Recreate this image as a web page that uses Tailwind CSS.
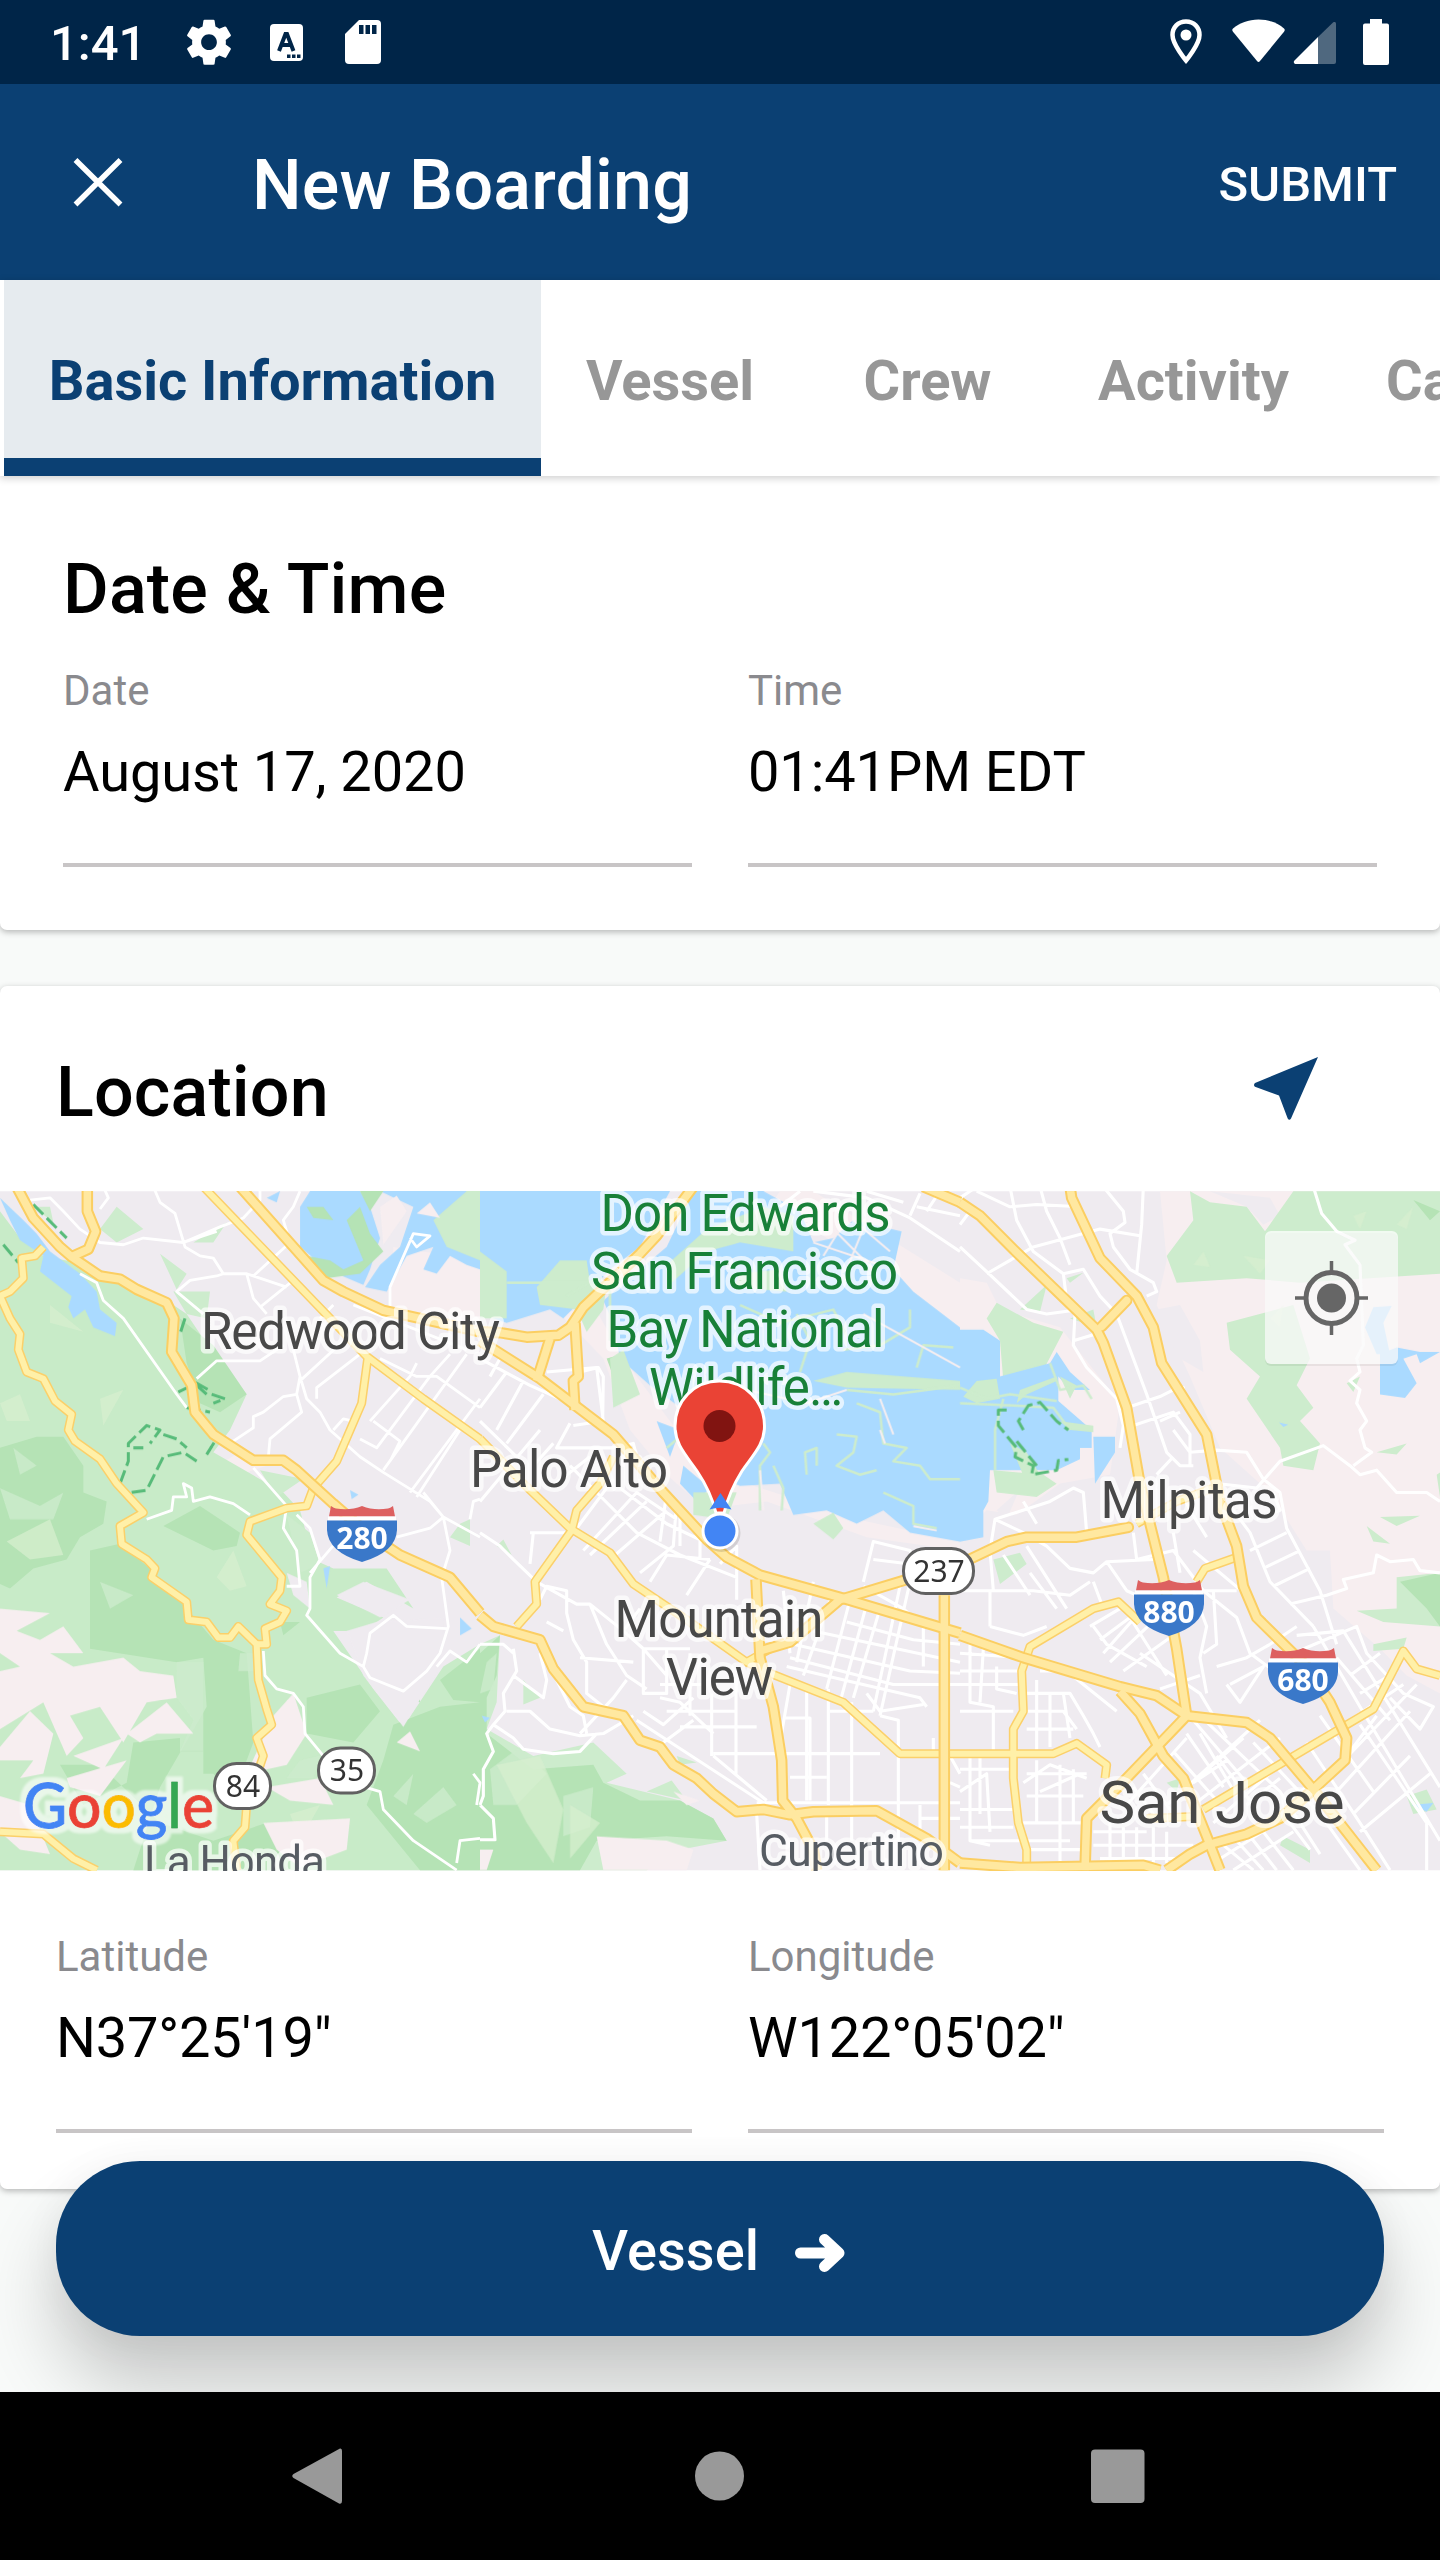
<!DOCTYPE html>
<html lang="en">
<head>
<meta charset="utf-8">
<title>New Boarding</title>
<script src="https://cdn.jsdelivr.net/npm/@tailwindcss/browser@4"></script>
</head>
<body class="w-[1440px] h-[2560px] overflow-hidden flex flex-col bg-[#f8faf9] font-['Roboto'] font-normal text-black relative">

<!-- Status bar -->
<header class="h-[84px] shrink-0 bg-[#002548] text-white flex items-center pl-[50px]">
  <span class="text-[49px] font-medium leading-[84px] w-[137px] pt-[4px]">1:41</span>
  <svg class="w-[253px] h-[84px] shrink-0" viewBox="187 0 253 84" fill="#fff">
    <path transform="translate(182 15.2) scale(2.25)" d="M19.43 12.98c.04-.32.07-.64.07-.98s-.03-.66-.07-.98l2.11-1.65c.19-.15.24-.42.12-.64l-2-3.46c-.12-.22-.39-.3-.61-.22l-2.49 1c-.52-.4-1.08-.73-1.69-.98l-.38-2.65A.488.488 0 0 0 14 2h-4c-.25 0-.46.18-.49.42l-.38 2.65c-.61.25-1.17.59-1.69.98l-2.49-1c-.23-.09-.49 0-.61.22l-2 3.46c-.13.22-.07.49.12.64l2.11 1.65c-.04.32-.07.65-.07.98s.03.66.07.98l-2.11 1.65c-.19.15-.24.42-.12.64l2 3.46c.12.22.39.3.61.22l2.49-1c.52.4 1.08.73 1.69.98l.38 2.65c.03.24.24.42.49.42h4c.25 0 .46-.18.49-.42l.38-2.65c.61-.25 1.17-.59 1.69-.98l2.49 1c.23.09.49 0 .61-.22l2-3.46c.12-.22.07-.49-.12-.64l-2.11-1.65zM12 15.5c-1.93 0-3.5-1.57-3.5-3.5s1.57-3.5 3.5-3.5 3.5 1.57 3.5 3.5-1.57 3.5-3.5 3.5z"/>
    <rect x="270" y="24" width="33" height="37" rx="4"/>
    <path fill="none" stroke="#002548" stroke-width="4" d="M279 51L285.500 34H287L293.500 51M281.500 45H291"/>
    <path fill="#002548" d="M287 54.500h3.500v3.500h-3.500zM292 54.500h3.500v3.500h-3.500zM297 54.500h3.500v3.500h-3.500z"/>
    <path d="M359 20H377a4 4 0 0 1 4 4V60a4 4 0 0 1-4 4H349a4 4 0 0 1-4-4V34Z"/>
    <path fill="#002548" d="M359 25h4.500v9h-4.500zM365.500 25h4.500v9h-4.500zM372 25h4.500v9h-4.500z"/>
  </svg>
  <svg class="w-[230px] h-[84px] ml-auto mr-[40px] shrink-0" viewBox="1170 0 230 84" fill="#fff">
    <path fill="none" stroke="#fff" stroke-width="4.500" d="M1186 21.500c-8 0-13.500 6-13.500 13.500 0 9.500 13.500 25.500 13.500 25.500s13.500-16 13.500-25.500c0-7.500-5.500-13.500-13.500-13.500Z"/>
    <circle cx="1186" cy="35" r="5.500"/>
    <path d="M1258.500 19.500c-10 0-19 3.500-25.500 9-1 1-1 2 0 3.300L1257 61c1 1.200 2 1.200 3 0l24-29.200c1-1.300 1-2.300 0-3.300-6.500-5.500-15.500-9-25.500-9Z"/>
    <path fill="#4f687f" d="M1318 37L1333 22.500c1.500-1 3-.5 3 1.500V62q0 2-2 2H1318Z"/>
    <path d="M1318 37V64H1296c-2 0-3-2-1.500-3.500Z"/>
    <path d="M1370 19h12v4.500h5q2 0 2 2V63q0 2-2 2H1365q-2 0-2-2V25.500q0-2 2-2h5Z"/>
  </svg>
</header>

<!-- App bar -->
<div class="h-[196px] shrink-0 bg-[#0b4073] text-white flex items-center pr-[43px]">
  <svg class="w-[252px] h-[196px] shrink-0" viewBox="0 84 252 196"><path d="M75.500 160L120.500 204.500M120.500 160L75.500 204.500" stroke="#fff" stroke-width="5.500"/></svg>
  <h1 class="text-[70px] font-medium leading-[82px] pt-[6px] whitespace-nowrap tracking-[0.15px]">New Boarding</h1>
  <span class="ml-auto text-[49px] font-medium leading-[58px] pt-[5px]">SUBMIT</span>
</div>

<!-- Tabs -->
<nav class="h-[196px] shrink-0 bg-white flex pl-[4px] overflow-hidden whitespace-nowrap text-[56px] font-bold text-[#979797] leading-[196px] shadow-[0_2px_8px_rgba(0,0,0,0.2)] relative z-10">
  <div class="w-[537px] shrink-0 bg-[#e6ebef] border-b-[18px] border-[#0b4073] text-[#0b4073] text-center pt-[3px]">Basic Information</div>
  <div class="w-[258px] shrink-0 text-center pt-[3px]">Vessel</div>
  <div class="w-[257px] shrink-0 text-center pt-[3px]">Crew</div>
  <div class="w-[275px] shrink-0 text-center pt-[3px]">Activity</div>
  <div class="w-[257px] shrink-0 pl-[55px] pt-[3px]">Catch</div>
</nav>

<main class="flex-1 flex flex-col gap-[56px] min-h-0">
  <!-- Date and time -->
  <section class="h-[454px] shrink-0 bg-white rounded-b-[7px] shadow-[0_2px_6px_rgba(0,0,0,0.28)] px-[63px] pt-[72px]">
    <h2 class="text-[70px] font-medium leading-[82px] tracking-[0.2px]">Date &amp; Time</h2>
    <div class="grid grid-cols-2 gap-[56px] mt-[36px]">
      <div class="h-[201px] border-b-[4px] border-[#c8c5c6]">
        <div class="text-[42px] leading-[50px] text-[#8a8a8e]">Date</div>
        <div class="text-[56px] leading-[66px] mt-[23px] tracking-[-0.1px]">August 17, 2020</div>
      </div>
      <div class="h-[201px] border-b-[4px] border-[#c8c5c6]">
        <div class="text-[42px] leading-[50px] text-[#8a8a8e]">Time</div>
        <div class="text-[56px] leading-[66px] mt-[23px] tracking-[-0.1px]">01:41PM EDT</div>
      </div>
    </div>
  </section>

  <!-- Location -->
  <section class="h-[1203px] shrink-0 bg-white rounded-[7px] shadow-[0_2px_6px_rgba(0,0,0,0.28)]">
    <div class="h-[205px] flex items-center justify-between pl-[56px] pr-[122px]">
      <h2 class="text-[70px] font-medium leading-[82px] pt-[6px] tracking-[0.15px]">Location</h2>
      <svg class="w-[65px] h-[63px]" viewBox="0 0 65 63"><path fill="#0b4073" d="M65 0L38 61.500Q36.300 64 34.700 61.500L26 38.500 2 29.800Q0 28 2 26Z"/></svg>
    </div>
    <svg class="block w-[1440px] h-[680px] font-['Roboto'] [&_path]:[vector-effect:non-scaling-stroke]" viewBox="0 1191 1440 680" stroke-linejoin="round">
      <defs>
        <!-- freeways and highways, drawn once as casing and once as surface -->
        <g id="fw" fill="none">
          <path d="M50 15L100 85 180 150 215 172 300 215 360 222 410 245 500 275 522 310 515 385 575 460 585 520 640 570 760 628 850 628 890 650 1000 725 1100 790 1200 840 1350 890 1440 970"/>
          <path d="M720 15L970 225 1030 250 1150 292 1290 315 1440 340"/>
          <path d="M262 15L262 70 287 115 265 155 215 172"/>
          <g transform="translate(1440)">
            <path d="M0 340L60 342 140 352 235 348 270 330 310 285 480 165 530 125 640 15"/>
            <path d="M285 320L295 440 280 450 285 515"/>
            <path d="M210 355L170 450"/>
            <path d="M0 360L180 445 400 570 550 700 680 805 740 845 840 885 1080 935 1440 1015"/>
            <path d="M0 975L40 1000 180 1030 220 1095 310 1180 430 1200 480 1255 540 1270 580 1310 650 1340 700 1375 770 1415 850 1410 930 1422 1000 1415 1190 1413 1340 1475 1440 1530"/>
            <path d="M828 895L840 1070 880 1180 905 1300 908 1390 950 1430 1000 1500 1010 1546"/>
            <path d="M840 1055L930 1035 1080 940 1280 895 1330 885"/>
            <path d="M1393 930L1393 1546" stroke-linecap="butt"/>
            <path d="M1330 15L1440 50"/>
          </g>
          <g transform="translate(2880)">
            <path d="M0 50L60 80 160 155 410 335 430 365 500 510 540 680 610 890 650 1050 680 1200"/>
            <path d="M330 15L335 40 420 175 530 260 580 330 605 410 740 570 780 720 830 820 850 910 890 980 1040 1090 1110 1170 1160 1250 1155 1300 1060 1365 960 1430 860 1465 740 1490 690 1510 620 1546"/>
            <path d="M425 328L500 270" stroke-linecap="round"/>
            <path d="M0 1020L190 1070 480 1135 590 1155 680 1200 860 1215 930 1250 1060 1365 1250 1546"/>
            <path d="M0 860L140 810 200 800 350 800 505 778" stroke-linecap="round"/>
            <path d="M680 1200L500 1340 380 1430 375 1546"/>
            <path d="M480 1145L540 1195 610 1290 670 1340 740 1470 780 1546"/>
            <path d="M0 1530L180 1540 550 1535 600 1546"/>
          </g>
        </g>
        <g id="rd" fill="none">
          <path d="M610 15L900 240 1100 395 1270 490 1440 580"/>
          <path d="M130 150L105 170 65 175 70 220 30 250 0 260 30 310 60 345 55 380 80 430 130 445 165 495 215 525 205 560 225 585 300 625 350 680 430 745 360 775 365 815 440 850 465 870 455 890 560 945 565 985 620 990 655 1025 690 1025 715 1000 770 1040 775 1120 800 1185 815 1220 770 1250 790 1290 740 1400 735 1450 700 1480 710 1546"/>
          <path d="M1103 400L1085 500 1010 630 940 690 920 730 860 735 750 765 740 795 845 890 840 920 810 950 860 965 840 990 795 1005 800 1040 770 1040"/>
          <path d="M0 1460L130 1465 220 1520 290 1546"/>
          <g transform="translate(1440)">
            <path d="M0 580L130 680 270 780 390 835 460 905 620 985 800 1080 870 1105 1090 1170 1260 1285 1440 1285"/>
            <path d="M400 620L360 680 290 740 275 785 165 900 170 950 110 1000"/>
            <path d="M800 1080L870 1050"/>
          </g>
          <g transform="translate(2880)">
            <path d="M0 1285L280 1285 350 1262 440 1310 435 1340"/>
            <path d="M530 770L650 720 760 690"/>
            <path d="M710 900L735 870 830 845"/>
            <path d="M540 990L475 945 400 960 210 1045 185 1100 190 1190 160 1230 160 1340 175 1440 200 1500 200 1546"/>
            <path d="M730 1410L1240 1185 1330 1055 1370 1095 1440 1110"/>
            <path d="M560 1430L720 1425"/>
          </g>
        </g>
        <filter id="halo" x="-10%" y="-20%" width="120%" height="140%">
          <feMorphology in="SourceAlpha" operator="dilate" radius="5" result="d"/>
          <feGaussianBlur in="d" stdDeviation=".8" result="b"/>
          <feFlood flood-color="#fff" flood-opacity=".6"/>
          <feComposite in2="b" operator="in"/>
          <feMerge><feMergeNode/><feMergeNode in="SourceGraphic"/></feMerge>
        </filter>
      </defs>

      <g transform="translate(0 1180) scale(.333333 .446429)">
        <path fill="#efebf0" d="M0 25H4320V1546H0Z"/>
        <!-- rural ground -->
        <g fill="#f7eef0">
          <path d="M1180 150L1440 180V320L1170 300Z"/>
          <path d="M650 640L720 610 800 640 720 660Z"/>
          <g transform="translate(1440)"><path d="M240 300L340 280 430 400 650 620 680 740 560 660 450 560 370 400Z"/><path d="M640 500L800 680 1130 760 1440 810 1440 830 1160 800 860 720 640 740ZM850 80L900 25H1000L1440 230V340L1240 230 1000 110Z"/></g>
          <g transform="translate(2880)"><path d="M600 25H1440V1150L1340 1110 1260 1050 1120 960 1110 830 1040 830 930 700 780 600 690 440 590 280 620 180Z"/><path d="M0 220L80 230 120 290 300 330 480 500 450 660 300 680 170 750 80 740 0 800Z"/></g>
        </g>
        <g fill="#efebf0"><g transform="translate(2880)"><path d="M750 25L930 40 960 80 910 100 860 60ZM590 290L660 280 720 360 730 430 660 400 600 330ZM110 740L170 700 180 690 140 760Z"/></g></g>
        <!-- open green -->
        <g fill="#cdeccd">
          <path fill="#c8ebc8" d="M0 70L60 130 130 170 230 185 380 220 500 270 560 300 650 400 740 480 690 560 640 610 850 700 900 740 940 850 1000 870 1160 870 1240 960 1100 900 1010 935 1150 980 1090 1010 1000 1010 1120 1140 1210 1225 1330 1090 1440 1040V1546H0Z"/>
          <path d="M100 60L160 95 150 60ZM300 110L350 60 430 110 350 140ZM480 165L560 210 530 245ZM520 250L630 250 620 310 560 300ZM580 140L680 95 640 140ZM780 650L910 670 830 710ZM860 750L930 790 960 860 900 880ZM1380 770L1410 760V820L1350 800Z"/>
          <g transform="translate(1440)"><path d="M0 1040L60 1020 50 1170 20 1230 160 1290 340 1260 440 1330 380 1350 600 1390 700 1430 740 1480 600 1500 500 1546H0ZM130 1120L180 1160 130 1175ZM50 820L70 805 95 840ZM500 1370L575 1345 620 1390ZM590 1290L650 1305 600 1310Z"/></g>
          <g transform="translate(2880)"><path d="M690 25L750 50 860 60 915 115 1000 25 1440 25V210L1020 230 860 220 650 230 620 170 700 90ZM800 320L1000 280 1050 400 1010 460 1060 510 1020 540 1080 590 1060 650 970 640 960 600 860 490 900 440 810 380ZM80 310L110 275 220 320 310 340 240 440 130 450 120 360ZM100 850L180 835 200 860 120 905ZM1250 610L1340 590 1310 615ZM1260 755L1380 752 1310 775ZM1220 775L1290 815 1240 810ZM1310 890L1440 880V1000L1270 990 1190 965 1310 960ZM1340 1380L1400 1365 1430 1410 1360 1420ZM970 1470L1050 1500 1050 1530 960 1490ZM1240 1040L1340 1025 1330 1050 1240 1055ZM330 310L400 290 410 330ZM180 290L260 235 240 295ZM320 220L370 208 330 230ZM1430 660L1440 655V710ZM1160 455L1200 440 1180 475ZM620 1350L660 1340 650 1370Z"/></g>
        </g>
        <!-- shaded hills -->
        <g fill="#b5e3b5">
          <path d="M110 575H190L250 640V700L320 720 310 770 240 800 200 850 100 870 30 915 0 905V600ZM270 830L360 815 450 870 560 960 640 1030 740 1060 760 1260 700 1380 640 1330H610V1280H540V1250L400 1260 380 1350 250 1400 180 1310 300 1310 480 1440 640 1480 800 1440 860 1546H400L480 1360 620 1180 610 1070 530 1080 270 1050ZM490 775L600 730 720 790 710 820 640 830ZM920 1160L1080 1130 1140 1190 1060 1260 920 1240ZM1150 1300L1180 1220 1320 1180 1440 1170V1546H1260L1100 1400ZM1320 1120L1440 1050V1170L1360 1165ZM1200 1160L1260 1130V1170ZM540 310L640 370 740 480 660 520 600 500 560 410ZM840 990L900 990 850 1020Z"/>
          <g transform="translate(1440)"><path d="M0 1060L60 1020 50 1110 20 1160V1240L160 1320 340 1310 370 1350 480 1390 600 1390 700 1430 740 1480 560 1470 350 1480 300 1546H0ZM380 400L430 390 440 450 400 440Z"/></g>
          <g transform="translate(2880)"><path d="M1320 900L1440 880V1000L1400 960ZM1360 45L1440 70 1410 90Z"/></g>
        </g>
        <g fill="#cdeccd" opacity=".8">
          <path d="M530 1080H610V1280H540L580 1210 530 1160ZM0 690L120 730 190 700 160 760 30 760ZM40 600L110 640 60 660ZM300 900L400 930 330 960ZM1240 1420L1330 1360 1370 1400 1280 1440ZM900 1300L960 1290 940 1340 860 1340ZM720 1060L760 1060 765 1100H715ZM1180 1380L1240 1330 1220 1400Z"/>
          <g transform="translate(1440)"><path d="M20 1080L50 1060 40 1140 0 1150ZM30 1320L120 1270 200 1330 110 1400 40 1400ZM250 1380L340 1360 330 1450 250 1470Z"/></g>
        </g>
        <g fill="#d8efd0" opacity=".7">
          <path d="M0 500L60 480 90 540 20 540ZM300 490L370 470 310 550ZM150 280L250 340 150 320ZM650 890L700 830 740 910 690 920ZM870 1420L960 1400 900 1480ZM20 810L150 760 190 840 90 850Z"/>
          <g transform="translate(1440)"><path d="M50 1310L180 1290 250 1410 220 1530 140 1440ZM270 1400L360 1440 270 1520Z"/></g>
          <g transform="translate(2880)"><path d="M700 190L730 160 750 195ZM850 170L930 180 900 210ZM930 310L970 280 960 330ZM1310 100L1360 60 1340 110ZM1180 80L1220 70 1200 110Z"/></g>
        </g>
        <!-- clearings among the hills -->
        <g fill="#f7eef0">
          <path d="M0 960L150 970 50 1010 120 1030 190 1000 250 1060 150 1060 220 1090 370 1070 420 1100 520 1110 530 1160 440 1170 370 1260 300 1180 210 1200 250 1250 200 1290 130 1170 0 1230 0 1100 60 1090 0 1060ZM0 1270L90 1190 160 1240 130 1330 60 1340 100 1300 0 1300ZM380 1240L500 1170 580 1240 470 1240 420 1260ZM200 1340L380 1300 300 1380 210 1360ZM220 1290L370 1250 310 1320ZM820 1200L880 1150 920 1240 860 1310 740 1330ZM800 1360L960 1340 1000 1400 870 1390ZM790 1440L1050 1430 1040 1500 900 1540 830 1500ZM0 1380L90 1400 150 1510 60 1500 0 1460ZM1190 1260L1230 1235 1260 1280Z"/>
          <path fill="#efebf0" d="M1010 930L1090 900 1230 940 1140 980ZM1040 1010L1130 990 1330 980 1320 1090 1210 1225 1090 1110ZM860 880L920 900 930 960 880 930Z"/>
          <g transform="translate(1440)"><path d="M350 1470L560 1480 640 1500 620 1546H370ZM0 1500L40 1500 20 1546H0ZM580 1370L660 1390 620 1400Z"/></g>
        </g>
        <!-- water -->
        <g fill="#aadaff">
          <path d="M0 40L70 90 110 120 150 160 240 210 290 250 300 290 350 320 345 350 280 330 255 290 220 310 205 285 215 260 120 205 130 170 60 135 30 90ZM900 60L930 25H1080L1110 60 1140 130 1110 200 1090 235 980 200 900 150ZM1140 25H1440V200L1400 190 1350 170 1310 210 1270 200 1300 150 1220 170 1160 250 1095 240 1140 190 1200 150 1240 60ZM800 40L840 25 830 50ZM1050 695L1075 705 1055 715ZM1380 980L1415 1005 1380 1020ZM970 870L990 865 980 915Z"/>
          <g transform="translate(1440)">
            <path d="M0 25H570L480 150 390 200 330 250 250 310 210 290 80 320 0 300ZM640 25H850L960 70 1000 140 1060 130 1120 90 1265 115 1240 200 1300 250 1440 330V810L1290 790 1210 740 1130 770 1040 740 940 750 900 680 780 685 660 650 620 520 510 460 420 400 400 320 370 270 480 200 560 150ZM5 1200L30 1205 15 1215Z"/>
            <path d="M610 640L690 690 650 720 600 680ZM530 540L600 560 570 620Z"/>
          </g>
          <g transform="translate(2880)"><path d="M0 335L70 335 120 360 120 440 270 410 290 385 330 430 390 470 330 470 295 440V495L395 560V600L360 600V625L290 650 90 650 85 720 70 740V800L0 810ZM400 575H465V610L405 680ZM1260 390L1310 375 1380 385 1440 385 1380 410 1370 390 1330 400 1370 455 1335 488 1260 480ZM1240 285L1295 282 1270 320 1290 390 1250 390 1215 330ZM1355 1400L1420 1395 1400 1415ZM957 543L985 548 970 553Z"/></g>
        </g>
        <!-- marshes and salt pond levees -->
        <g fill="#cdeccd">
          <path fill="#b5e3b5" d="M920 60L940 85 1000 90 970 60ZM1040 90L1080 60 1110 120 1150 160 1080 210 980 220 920 170 990 180 1030 200 1090 180ZM1080 25H1150L1110 70Z"/>
          <path d="M1300 90L1400 25H1440V180L1340 150Z"/>
          <path fill="#f7eef0" d="M1140 60L1190 35 1220 70 1150 145ZM1250 75L1290 50 1320 85Z"/>
          <g transform="translate(1440)"><path d="M0 160L80 205 80 310 0 310ZM170 240L240 180 320 180 330 230 380 230 370 290 320 340 290 290 180 280ZM560 190L680 110 850 60 940 80 940 160 780 140 680 160 560 240ZM390 400L430 380 480 480 400 510ZM1000 770L1060 745 1090 780 1060 805ZM640 700L770 700 740 760 640 750ZM780 210L900 200 920 250 760 240ZM1000 450L1100 430 1440 450 1440 470 1100 465Z"/></g>
          <g transform="translate(2880)"><path d="M10 485L50 450 110 445 120 490 50 500ZM170 500L180 470 290 440 290 450 200 480ZM150 590L200 610 240 660 200 680ZM100 650L250 660 290 680 230 710 110 700ZM300 440L350 460 330 490ZM300 540L400 550V565L330 560Z"/></g>
        </g>
        <g fill="none" stroke="#cdeccd" stroke-width="2.500">
          <g transform="translate(1440)"><path d="M840 740L840 640 870 610 850 590M905 740L910 690 880 640M980 660L975 610 1010 600V640M1070 570L1130 575 1120 610 1070 640 1140 660 1190 650M1130 500L1200 520 1210 590 1280 600 1240 630 1320 640 1350 670 1440 670M1100 470L1240 480 1440 460M1090 380L1200 370 1290 330 1290 290M960 430L990 360 950 300M1310 420L1330 370 1420 375M1210 700L1300 730 1300 770 1370 780M780 280L900 320 1060 290 1100 350M260 260L350 220 390 250V360M80 230H330M640 550L560 600"/></g>
          <g transform="translate(2880)"><path d="M0 465L80 490 150 480 290 495M130 490L105 560V650M0 500L160 505 280 510 330 560M270 410L300 470 370 460 395 490"/></g>
        </g>
        <g fill="none" stroke="#f7eef0" stroke-width="2">
          <g transform="translate(1440)"><path d="M1000 140L1200 190M1060 110L1180 200M1120 90L1230 160M1100 200L1160 90M1030 170L1080 110M800 470L980 500 1100 470M1240 570L1200 490M850 740L840 650M1150 300L1440 420M1200 560L1215 590M1300 775L1370 785"/></g>
        </g>
        <!-- trails -->
        <g fill="none" stroke="#57bb79" stroke-width="3" stroke-dasharray="14 5">
          <path d="M100 55L200 130M10 145L55 185M555 310L540 345M535 475L590 455 625 470M590 460L620 480M635 480L675 490 640 500M560 510L630 520M360 680L385 630 385 590 440 550 480 560 450 590M400 600L430 600M395 700L440 695 490 620 550 610 590 630M490 570L530 580 560 600M620 615L645 585"/>
          <g transform="translate(2880)"><path d="M140 515H115V550L170 600 165 620 220 640 215 660 290 650 295 628 325 626M190 560L175 540 205 505 240 498 290 540 325 560M170 585L230 640"/></g>
        </g>

        <!-- minor streets -->
        <g fill="none" stroke="#fff" stroke-width="3.100">
          <path stroke-width="2.800" d="M90 45L150 40 190 70 240 110 300 140 370 145 430 130 550 140 660 105 730 85 780 45V15M460 15L480 50 525 75 555 150 600 170 640 175 670 210 740 210 760 265 800 300M550 140L650 115M670 210L650 215 570 225 530 250 610 300M760 215L870 140 850 90 880 60 900 25M740 210L860 240M780 285L880 225M310 15L325 40 300 65M240 210L290 230 310 270 370 310 530 480 560 510M590 445L650 405 780 405 850 370M880 380L900 440 890 480 850 485 790 520 760 530 760 555 700 585M900 440L920 490 960 520 990 560 1080 620 1150 655 1290 720 1330 755 1440 800M900 450L1060 340M950 490V465L1080 390M890 480L905 520 810 580 805 620M1000 280L960 310M1060 280L1400 380M1140 400L1250 440 1310 440 1440 510M1110 540L1230 440 1250 410M1080 580L1130 600 1290 440 1350 390M1150 650L1400 390M1230 700L1440 490M1250 710L1380 560M1120 540L1200 585 1170 630M1000 560L1030 535 1060 540M1170 300V240L1240 120 1290 125 1250 150 1230 130M440 760L515 740 520 710 560 710 550 680 575 690 580 720 630 710 700 725 750 750M760 645L860 730 850 780 890 830 900 910 860 910M890 750L930 780 960 850 930 890 930 960 920 975 1020 1060 1090 1090 1110 1115 1210 1145 1280 1100 1320 1060 1345 1000 1325 890 1350 830 1330 755M930 880L1010 810M1190 800L1290 780 1330 755 1270 700M1340 1005L1220 1000 1180 975 1110 1015 1100 1060 1090 1090M1310 1090L1350 1055 1400 1080 1440 1040M790 1055L795 1110 830 1140 880 1150 910 1180 915 1240 970 1290 1050 1350 1140 1370 1150 1410 1240 1480 1370 1546M1420 1330L1440 1350 1430 1400M1370 1530L1380 1480 1440 1475M1410 760L1420 720 1440 715"/>
          <g transform="translate(1440)">
            <path d="M0 400L150 460 270 500M0 510L80 430M50 560L130 450M80 590L190 480M30 440L60 400 120 410M220 590L160 640M300 430L355 420 370 440 368 540M270 545L230 600 400 600 460 590 480 650M200 430L350 420 370 540 280 550M0 720L180 560M0 790L60 820 100 850 170 900 290 950 330 950 430 1010 490 1050 560 1110M150 790L270 790M160 790L150 860M0 540L110 620M270 640L350 700 470 790 600 840 770 890M210 690L330 620M310 830L470 700 590 760M290 780L400 670M330 840L500 720M390 850L560 740M420 690L560 770 700 820M510 900L560 840 690 850M480 880L580 820 590 720M540 810L560 700M600 820V730M660 850V800M720 860L770 820V940M620 930L690 850M180 940L200 910 260 920 260 970 280 1030 320 1080 320 1150 370 1180M200 990L250 1010M300 1070L460 1080M330 950L380 1040 440 1110 500 1140M430 1010L480 960M490 1050H630M490 1050V1150H560V1050M540 1160L600 1170 700 1240M440 1120L400 1160 300 1240M100 1050L110 1100 70 1150 75 1190 40 1220 20 1240 40 1280 10 1320 10 1380 0 1400M80 1190L150 1190 210 1230 300 1245 370 1240 460 1200M40 1220L100 1250 130 1275 220 1285 300 1280 350 1240M100 1110L190 1160 200 1120 180 1060M230 1120L270 1180 310 1200 320 1240M0 1040L70 1040 100 1060M0 1400L40 1430 45 1478 0 1478"/>
            <path d="M630 1060V1200M695 1150V1290M768 1110V1330M560 1190H768M600 1225H830M540 1130H670M470 1210L860 1400M490 1190L550 1220 640 1160M550 1260L640 1210M700 1285H1200M830 1395H1440M860 1390L700 1290M830 1420L840 1546M930 1130L900 1260M910 1205H990V1390M980 1130V1390M1045 1140V1400M1040 1420V1480M1115 1170V1480M1255 1290V1480M930 1338H1040M930 1060L910 920M1000 900L950 1080M1060 920L970 1110M1110 940L1040 1140M1160 950L1080 1170M1200 960L1120 1160M1260 910L1180 1190M1290 900L1200 1200M940 1040L1290 1100 1440 1105M930 1070L1240 1130 1440 1130M920 1090L1320 1160 1340 1180M1000 1010L1440 1080M1100 990L1300 1030 1440 1040M1150 900L1180 810 1290 830 1300 850M1180 850L1290 860M1150 910L1270 960 1330 1000V1090M1200 1200L1255 1210V1290M900 970L1010 1000M1050 1190H1180M1160 1150L1200 1190 1330 1175M1320 1400V1480M1320 1430H1440M1360 1290V1250M1410 1290L1440 1330M1410 1350L1440 1360M900 60L960 25M1000 25L1160 40 1290 85 1440 160M1290 80L1320 30M1310 60L1440 80M1270 50L1160 25M1340 70L1380 25"/>
          </g>
          <g transform="translate(2880)">
            <path d="M0 40L50 15M50 25L150 60 230 55 360 60M150 15L170 90 220 160 310 210 370 200 420 260 470 300 560 480 620 610 660 640 700 640M240 15L260 70 300 130 330 190M80 210L220 150 420 110 540 125M0 100L30 70M0 150L80 205 200 290 260 300 360 290M430 15L490 70 495 95 450 120 460 150 510 200 580 230 590 250 560 260M550 15L545 100 530 210M310 210L320 270 345 300 340 370 380 420 470 490 490 550 480 600M340 360L430 340M500 510L600 485 640 470 670 465V500M600 540L660 520M520 550L640 520 690 570 690 640M640 560L690 610 770 605 860 610 910 670 960 700 980 780 1080 920 1130 1040M590 660L640 620M660 690L690 740 740 800M810 730L870 790 930 900 1060 1000M890 760L960 740 940 700M770 680L890 690 960 630 1090 595 1170 640 1200 660 1250 650 1310 700 1400 700 1440 720M870 830L980 790M910 870L1020 830M940 910L1050 870M990 950L1100 930 1160 915 1150 895 1240 880 1250 840 1290 855 1360 850 1380 875 1440 880M1060 15L1085 75 1130 115 1185 135 1155 145 1200 190 1210 370 1190 400 1200 430 1170 450 1200 470 1190 500 1220 540 1200 560 1215 600 1235 610 1180 640M100 920L90 830 105 760 190 790 260 820 330 870 400 880 440 855 580 850M105 760L270 720 340 690 370 700 380 790M190 720L230 770M130 840L210 930M0 920H220L330 930 390 900M90 920V1000M210 880L290 960M90 1000L190 1020 260 1000M200 820L320 960M440 855L500 920 530 930M400 900L430 960M520 790L530 850 640 830 730 920H830M640 790L660 880M700 830L860 930M400 1000L440 1040 560 1090M390 1000L480 960M430 1060L560 950M450 1080L620 960M490 1100L640 1020M420 1030L510 980 620 1110M540 1060L720 1150 800 1250M700 920L740 1000 720 1070 740 1150M760 920L770 1040 730 1060M730 920L830 980 870 1060 960 1110M770 1090L860 1070 930 1040M810 1130L910 1090 840 1170 800 1130M600 1140L720 1110M900 980L1050 1120M930 1040L1010 1000M1000 1060L1190 1000 1220 1060 1330 1150 1420 1180 1380 1230 1290 1160M1010 1020L1150 1010 1440 1360M1060 1000L1200 1180 1440 1480M1200 1220L1400 1440V1546M1130 1070L1290 1210M1170 1110L1260 1060M1200 1150L1310 1100M1130 1230L1330 1130M1080 1200L1240 1370M1040 1260L1200 1440 1290 1546M1160 1290L1250 1200M1100 1340L1370 1130M1130 1370L1350 1190M1180 1420L1350 1290M1200 1460L1410 1330"/>
            <path d="M0 1060L190 1070M0 1100H180M0 1130H190M30 1020V1170L100 1180V1280M70 1050L60 1170M0 1190H160M110 1090V1140L170 1150M190 1150H330L370 1200 400 1240 420 1270M200 1190H310L350 1230M230 1120V1280M270 1150V1270M310 1150L330 1250M200 1230H340M240 1100L320 1100 470 1190M0 1320H150M0 1370L80 1330 90 1460M30 1290V1480L90 1490M60 1290V1420M0 1410H170M0 1450H160M30 1480H330M230 1300V1440M200 1330H380M190 1350L270 1310 380 1340M240 1370L360 1330M300 1310V1546M340 1320V1440M200 1380H370M190 1440H370M200 1500H370M400 1490H700M400 1460H560M420 1520H650M450 1440V1546M490 1450V1546M530 1450V1546M580 1450V1530M620 1460V1530M500 1400L680 1250M520 1360L590 1430M550 1330L660 1440M640 1280L770 1390M700 1210L860 1350M720 1240L830 1380M680 1240L790 1360M650 1380L900 1210M620 1400L850 1250M700 1400L960 1250M700 1350L800 1300M760 1440L960 1310M720 1200L960 1370 1080 1510M860 1400L960 1340M880 1260L1080 1420 1200 1546M770 1290L870 1390M790 1490L880 1546M830 1480L910 1546M870 1470L950 1546M910 1460L1000 1546M760 1530L970 1430M820 1546L1000 1460M1000 1380L1100 1330M960 1410L1050 1500"/>
          </g>
        </g>
        <!-- yellow roads -->
        <use href="#rd" stroke="#fbd06a" stroke-width="9"/>
        <use href="#rd" stroke="#fff0a8" stroke-width="6"/>
        <use href="#fw" stroke="#fbce62" stroke-width="11.500"/>
        <use href="#fw" stroke="#ffe8a0" stroke-width="7.500"/>
      </g>

      <!-- place labels -->
      <g fill="#484848" stroke="#fff" stroke-opacity=".68" stroke-width="9" paint-order="stroke" font-size="51">
        <text x="201" y="1349" textLength="299">Redwood City</text>
        <text x="470" y="1487" textLength="198">Palo Alto</text>
        <text x="614.500" y="1637" textLength="209">Mountain</text>
        <text x="666" y="1695" textLength="107">View</text>
        <text x="1100.500" y="1517.500" textLength="177">Milpitas</text>
        <text x="1099.500" y="1823" font-size="60" textLength="245">San Jose</text>
        <g fill="#575c63" font-size="45">
          <text x="759" y="1866" textLength="185">Cupertino</text>
          <text x="144" y="1877" font-size="44" textLength="181">La Honda</text>
        </g>
        <g fill="#188038">
          <text x="600.500" y="1231" textLength="290">Don Edwards</text>
          <text x="591" y="1288.500" textLength="307">San Francisco</text>
          <text x="606.500" y="1347" textLength="278">Bay National</text>
          <text x="649" y="1405" textLength="194">Wildlife…</text>
        </g>
      </g>

      <!-- interstate shields -->
      <defs>
        <g id="shield">
          <path fill="#dd6060" d="M-33 10.500L-31 0Q-28 2-26 2.500Q-12 5 0 0Q12 5 26 2.500Q28 2 31 0L33 10.500Z"/>
          <path fill="#fff" d="M-34 10.500H34V14.500H-34Z"/>
          <path fill="#3a78c9" d="M-35 14.500H35V24Q34 46 0 56Q-34 46-35 24Z"/>
        </g>
      </defs>
      <g font-family="Noto Sans" font-weight="700" font-size="30" fill="#fff" text-anchor="middle">
        <use href="#shield" x="362" y="1506"/><text x="362" y="1548.500">280</text>
        <use href="#shield" x="1169" y="1580"/><text x="1169" y="1622.500">880</text>
        <use href="#shield" x="1303" y="1648"/><text x="1303" y="1690.500">680</text>
      </g>
      <g fill="#fff" stroke="#616161" stroke-width="3">
        <rect x="214.500" y="1763.500" width="56" height="45" rx="22"/>
        <rect x="318.500" y="1748" width="56" height="45" rx="22"/>
        <rect x="903.500" y="1548.500" width="70" height="45" rx="22"/>
      </g>
      <g fill="#333" text-anchor="middle" font-size="30" font-family="Noto Sans">
        <text x="243" y="1797">84</text><text x="347" y="1780.500">35</text><text x="939" y="1582">237</text>
      </g>

      <!-- Google attribution -->
      <text x="23" y="1828" font-family="Lato" font-size="62" font-weight="500" textLength="191" lengthAdjust="spacingAndGlyphs" stroke-width=".8" filter="url(#halo)"><tspan fill="#4285f4" stroke="#4285f4">G</tspan><tspan fill="#ea4335" stroke="#ea4335">o</tspan><tspan fill="#fbbc05" stroke="#fbbc05">o</tspan><tspan fill="#4285f4" stroke="#4285f4">g</tspan><tspan fill="#34a853" stroke="#34a853">l</tspan><tspan fill="#ea4335" stroke="#ea4335">e</tspan></text>

      <!-- marker and current position -->
      <path fill="#ea4335" stroke="#fff" stroke-width="3" d="M719.500 1381C694 1381 675 1401 675 1426C675 1444 685 1454 697 1471Q711 1492 716 1513H724Q729 1492 742 1471C754 1454 764.500 1444 764.500 1426C764.500 1401 745 1381 719.500 1381Z"/>
      <circle cx="719.500" cy="1426" r="16" fill="#811411"/>
      <path fill="#4285f4" d="M720.500 1493L731.500 1509.500Q720.500 1506 709.500 1509.500Z"/>
      <circle cx="721.500" cy="1533" r="19" fill="#000" opacity=".12"/>
      <circle cx="720" cy="1531" r="17" fill="#4285f4" stroke="#fff" stroke-width="3"/>

      <!-- my-location control -->
      <rect x="1265" y="1233" width="133" height="133" rx="6" fill="#000" opacity=".06"/>
      <rect x="1265" y="1231" width="133" height="133" rx="6" fill="#fff" opacity=".72"/>
      <g fill="none" stroke="#666" stroke-width="5"><circle cx="1331.500" cy="1298" r="25.500"/><path stroke-width="3.500" d="M1295 1298h11M1357 1298h11M1331.500 1261v11M1331.500 1324v11"/></g>
      <circle cx="1331.500" cy="1298" r="14.500" fill="#666"/>
    </svg>
    <div class="grid grid-cols-2 gap-[56px] px-[56px] pt-[61px]">
      <div class="h-[201px] border-b-[4px] border-[#c8c5c6]">
        <div class="text-[42px] leading-[50px] text-[#8a8a8e]">Latitude</div>
        <div class="text-[56px] leading-[66px] mt-[23px] tracking-[-0.2px]">N37°25'19"</div>
      </div>
      <div class="h-[201px] border-b-[4px] border-[#c8c5c6]">
        <div class="text-[42px] leading-[50px] text-[#8a8a8e]">Longitude</div>
        <div class="text-[56px] leading-[66px] mt-[23px] tracking-[-0.2px]">W122°05'02"</div>
      </div>
    </div>
  </section>
</main>

<!-- Next-step button floating over the form -->
<div class="absolute left-[56px] top-[2161px] w-[1328px] h-[175px] rounded-[84px] bg-[#0b4073] text-white flex items-center justify-center gap-[35px] pr-[2px] shadow-[0_50px_75px_rgba(0,0,0,0.2),0_4px_40px_rgba(0,0,0,0.05)]">
  <span class="text-[56px] font-medium leading-[66px] pt-[4px]">Vessel</span>
  <svg class="w-[52px] h-[40px] mt-[8px]" viewBox="0 0 52 40" fill="none" stroke="#fff" stroke-width="11" stroke-linecap="round" stroke-linejoin="round"><path d="M6.500 20H42M30.500 6.500L45 20 30.500 33.500"/></svg>
</div>

<!-- System navigation -->
<footer class="h-[168px] shrink-0 bg-black relative z-10">
  <svg class="block w-[1440px] h-[168px]" viewBox="0 2392 1440 168" fill="#999">
    <path d="M340 2448.500Q342 2448 342 2451V2501Q342 2504.500 339 2503.500L293.500 2478Q291 2476 293.500 2474Z"/>
    <circle cx="719.500" cy="2476" r="24.500"/>
    <rect x="1091" y="2449.500" width="53.500" height="53.500" rx="4"/>
  </svg>
</footer>
</body>
</html>
